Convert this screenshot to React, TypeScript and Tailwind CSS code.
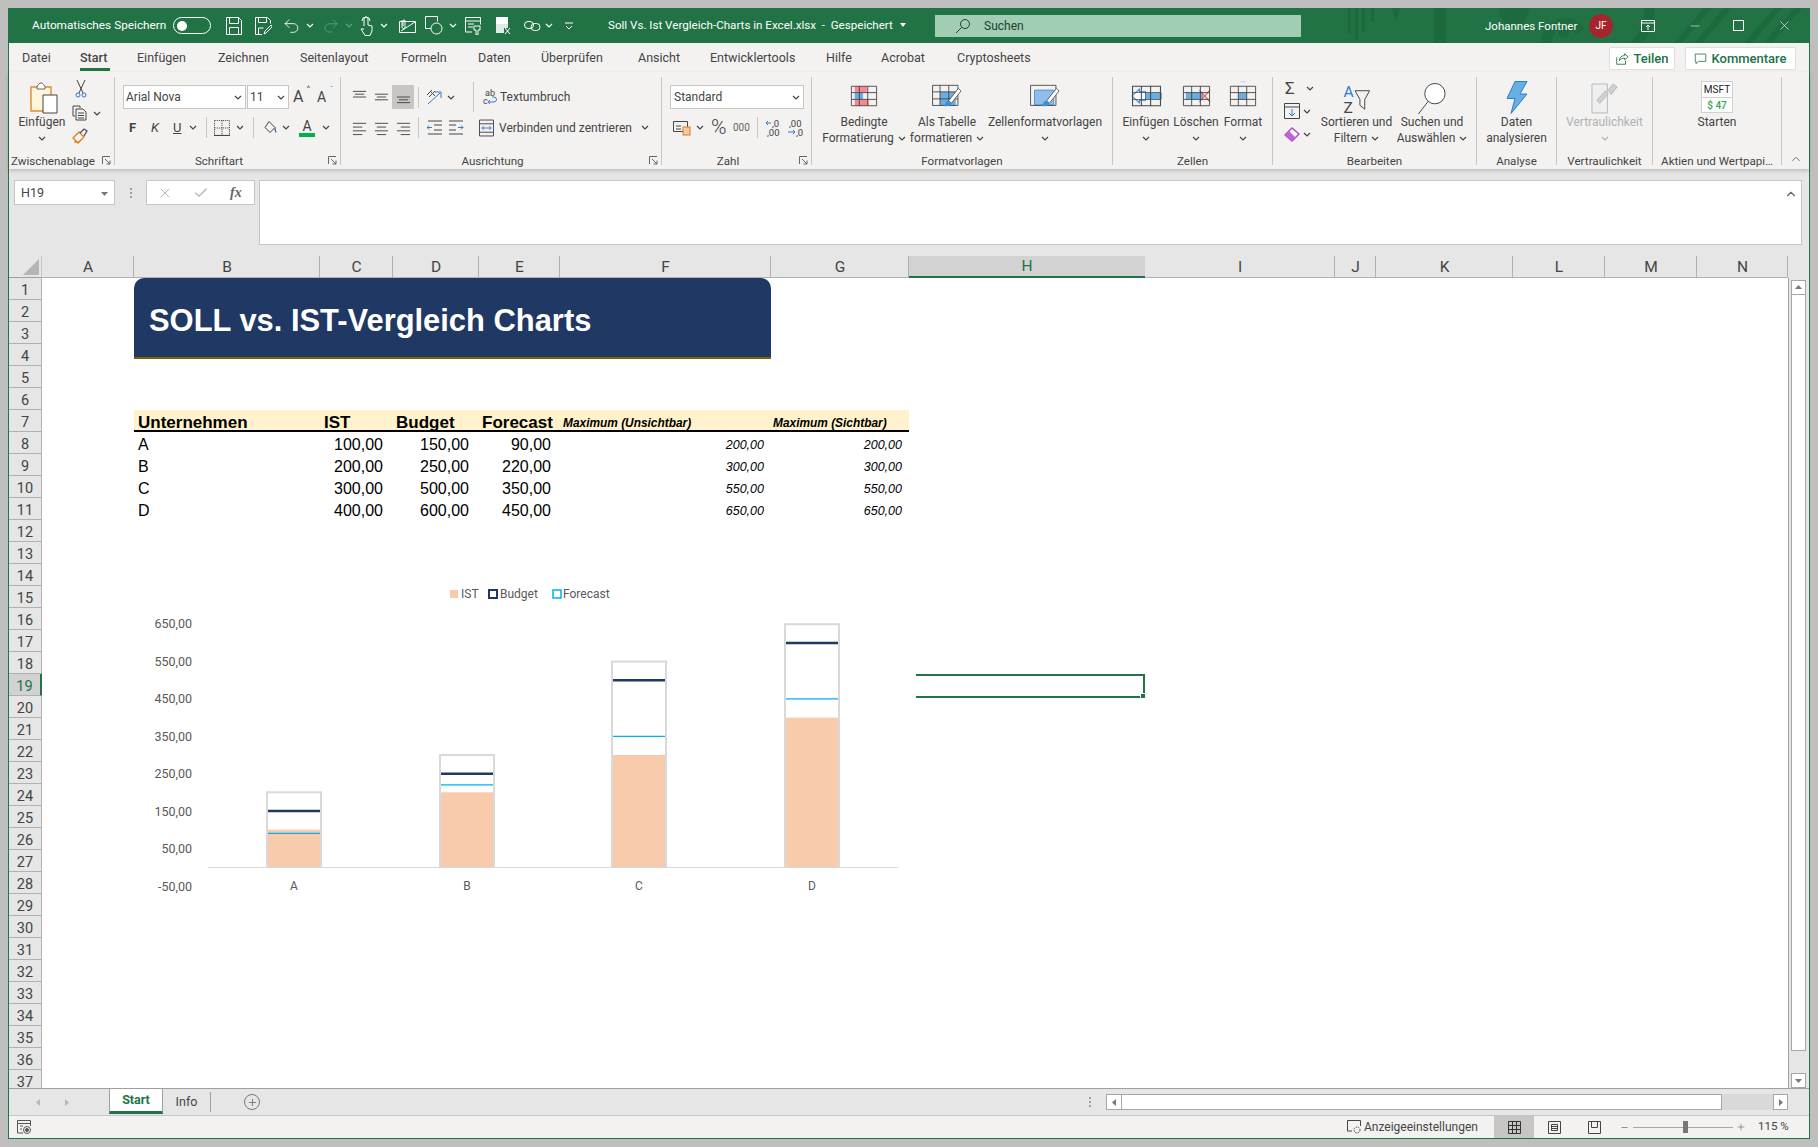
import type { ReactNode } from "react";
import { Check, ChevronUp, Minus, Plus, Redo2, Undo2, X } from "lucide-react";

const rows = Array.from({ length: 37 }, (_, i) => i + 1);

const columns = [
  ["A", ""],
  ["B", ""],
  ["C", ""],
  ["D", ""],
  ["E", ""],
  ["F", ""],
  ["G", ""],
  ["H", "sel"],
  ["I", ""],
  ["J", ""],
  ["K", ""],
  ["L", ""],
  ["M", ""],
  ["N", ""],
];

const tableRows = [
  ["A", "100,00", "150,00", "90,00", "200,00", "200,00"],
  ["B", "200,00", "250,00", "220,00", "300,00", "300,00"],
  ["C", "300,00", "500,00", "350,00", "550,00", "550,00"],
  ["D", "400,00", "600,00", "450,00", "650,00", "650,00"],
];

const bars = [
  { name: "A", x: 267, ist: 100, budget: 150, forecast: 90, max: 200 },
  { name: "B", x: 440, ist: 200, budget: 250, forecast: 220, max: 300 },
  { name: "C", x: 612, ist: 300, budget: 500, forecast: 350, max: 550 },
  { name: "D", x: 785, ist: 400, budget: 600, forecast: 450, max: 650 },
];

const axis = [
  ["650,00", 624],
  ["550,00", 662],
  ["450,00", 699],
  ["350,00", 737],
  ["250,00", 774],
  ["150,00", 812],
  ["50,00", 849],
  ["-50,00", 887],
] as const;

const yFor = (v: number) => 867 - v * 0.3735;

// small chevron used all over the ribbon
const Chev = ({ className = "" }: { className?: string }) => (
  <svg viewBox="0 0 8 5" className={`h-[5px] w-[8px] shrink-0 ${className}`} fill="none" stroke="currentColor" strokeWidth="1.2">
    <path d="M1 1l3 3 3-3" />
  </svg>
);

const Group = ({
  label,
  width,
  launcher,
  children,
}: {
  label: string;
  width: string;
  launcher?: boolean;
  children: ReactNode;
}) => (
  <div className={`relative my-[5px] h-[88px] shrink-0 border-r border-[#c8c6c4] ${width}`}>
    <div className="flex h-[76px]">{children}</div>
    <div className={`h-[16px] whitespace-nowrap text-center text-[11.6px] leading-[16px] text-[#444] ${launcher ? "pr-[17px]" : ""}`}>{label}</div>
    {launcher && (
      <svg viewBox="0 0 9 9" className="absolute right-[3px] top-[79px] h-[9px] w-[9px]" fill="none" stroke="#666" strokeWidth="1">
        <path d="M.5 8V.5H8M3 3l5 5M8 4.5V8H4.5" />
      </svg>
    )}
  </div>
);

const Big = ({
  icon,
  l1,
  l2,
  chevBelow,
  chevInline,
  width,
  gray,
}: {
  icon: ReactNode;
  l1: string;
  l2?: string;
  chevBelow?: boolean;
  chevInline?: boolean;
  width: string;
  gray?: boolean;
}) => (
  <div className={`flex shrink-0 flex-col items-center whitespace-nowrap text-[12px] leading-[16px] ${width} ${gray ? "text-[#b1b1b1]" : "text-[#444]"}`}>
    <div className="flex h-[37px] items-center">{icon}</div>
    <div>{l1}</div>
    {l2 && (
      <div className="flex items-center gap-[4px]">
        {l2}
        {chevInline && <Chev />}
      </div>
    )}
    {chevBelow && (
      <div className="flex h-[16px] items-center">
        <Chev />
      </div>
    )}
  </div>
);

// the grid glyph shared by the big format and cell buttons
const GridIco = ({ children, className = "h-[22px] w-[28px]" }: { children?: ReactNode; className?: string }) => (
  <svg viewBox="0 0 30 26" preserveAspectRatio="none" className={className} fill="none">
    {children}
    <path d="M1.5 1.5h27v23h-27zM1.5 9h27M1.5 17h27M10 1.5v23M19 1.5v23" stroke="#444" strokeWidth="1" />
  </svg>
);

const BrushBit = () => (
  <g>
    <path d="M30 5L19 19l3 3L33 8z" fill="#fff" stroke="#555" strokeWidth="1" />
    <path d="M19 19c-3 0-4 2-5 6 3 1 7 0 8-3z" fill="#3f8fd2" />
  </g>
);

const Lines = ({ d, className = "h-[16px] w-[16px]", stroke = "#444" }: { d: string; className?: string; stroke?: string }) => (
  <svg viewBox="0 0 16 16" className={className} fill="none" stroke={stroke} strokeWidth="1">
    <path d={d} />
  </svg>
);

const TitleBarPattern = () => (
  <svg viewBox="0 0 465 35" className="absolute right-0 top-0 h-[35px] w-[465px]" fill="#1c6a3e">
    <path d="M4 0h3v26H4zM11 0h3v32h-3zM18 0h3v24h-3zM27 0h3v14h-3zM48 0h8l-4 14zM90 0h12v35H90z" />
    <path d="M155 0h30c-1 12-8 19-15 19s-14-7-15-19z" />
    <path d="M197 35a24 24 0 0 1 44-14l-9 6a13 13 0 0 0-24 8z" />
    <circle cx="220" cy="24" r="6" />
    <path d="M300 0h10c1 14-4 27-12 35h-12c9-9 15-21 14-35zM330 35l30-35h8l-30 35zM350 35l30-35h8l-30 35zM400 35l30-35h8l-30 35zM420 35l30-35h8l-30 35z" />
  </svg>
);

const TitleBar = () => (
  <div className="relative flex h-[35px] shrink-0 items-center overflow-hidden bg-[#217346] text-white">
    <TitleBarPattern />
    <div className="relative flex items-center">
      <div className="ml-[23px] w-[141px] whitespace-nowrap text-[11.8px]">Automatisches Speichern</div>
      <div className="flex h-[17px] w-[38px] items-center rounded-full border border-white pl-[3px]">
        <div className="h-[10px] w-[10px] rounded-full bg-white" />
      </div>
      <svg viewBox="0 0 16 18" className="ml-[15px] h-[18px] w-[16px]" fill="none" stroke="#fff">
        <path d="M.5.5h12l3 3v14H.5zM3.5.5v6h9v-6M3.5 17.5v-7h9v7" />
      </svg>
      <svg viewBox="0 0 17 18" className="ml-[13px] h-[18px] w-[17px]" fill="none" stroke="#fff">
        <path d="M7 17.5H.5V.5h12l3 3v3M3.5.5v5h8v-5M3.5 17v-6h5M9 17l1-3 6-6 1 1 0 1-6 6z" />
      </svg>
      <Undo2 className="ml-[10px] h-[20px] w-[19px]" strokeWidth={1.1} />
      <Chev className="ml-[5px]" />
      <Redo2 className="ml-[8px] h-[20px] w-[18px] text-[#5aa37d]" strokeWidth={1.1} />
      <Chev className="ml-[5px] text-[#5aa37d]" />
      <svg viewBox="0 0 13 20" className="ml-[7px] h-[20px] w-[13px]" fill="none" stroke="#fff">
        <path d="M4 10V3a2 2 0 0 1 4 0v6l4 1v5l-2 4.5H5L1 13l3 0M2 5a4 4 0 0 1 8 0" />
      </svg>
      <Chev className="ml-[7px]" />
      <svg viewBox="0 0 17 14" className="ml-[11px] h-[14px] w-[17px]" fill="none" stroke="#fff">
        <path d="M.5 2.5h16v11H.5zM2 12L16 3M3 1v7a1.5 1.5 0 0 0 3 0V2a1 1 0 0 0-2 0v5" />
      </svg>
      <svg viewBox="0 0 18 19" className="ml-[9px] h-[19px] w-[18px]" fill="none" stroke="#fff">
        <path d="M6 12.5H.5V.5h12v5" />
        <circle cx="11.5" cy="12.5" r="5.5" />
      </svg>
      <Chev className="ml-[6px]" />
      <svg viewBox="0 0 16 18" className="ml-[8px] h-[18px] w-[16px]" fill="none" stroke="#fff">
        <path d="M7 15H.5V.5h15v7M.5 4h15M3 7h6M3 10h5M9 9h6v4h-2v5h-2v-5H9z" />
      </svg>
      <svg viewBox="0 0 15 18" className="ml-[15px] h-[18px] w-[15px]">
        <path d="M0 0h12v7H0z" fill="#fff" />
        <path d="M0 7h12v4H8v5H0z" fill="#fff" opacity=".85" />
        <path d="M9 11l5 6M14 11l-5 6" stroke="#fff" fill="none" />
      </svg>
      <svg viewBox="0 0 17 12" className="ml-[13px] h-[12px] w-[17px]" fill="none" stroke="#fff">
        <rect x=".5" y="1.5" width="9" height="7" rx="3.5" />
        <rect x="7" y="3.5" width="9" height="7" rx="3.5" />
      </svg>
      <Chev className="ml-[4px]" />
      <svg viewBox="0 0 8 8" className="ml-[12px] h-[8px] w-[8px]" fill="none" stroke="#fff">
        <path d="M0 1h8M1 4l3 3 3-3" />
      </svg>
      <div className="ml-[35px] flex w-[327px] items-center gap-[7px] whitespace-nowrap text-[11.6px]">
        Soll Vs. Ist Vergleich-Charts in Excel.xlsx&nbsp; -&nbsp; Gespeichert
        <svg viewBox="0 0 6 4" className="h-[4px] w-[6px]" fill="#fff">
          <path d="M0 0h6L3 4z" />
        </svg>
      </div>
      <div className="flex h-[22px] w-[366px] items-center bg-[#a0cdb3] pl-[20px] text-[12px] text-[#24402f]">
        <svg viewBox="0 0 16 16" className="h-[16px] w-[16px]" fill="none" stroke="#24402f">
          <circle cx="10" cy="6" r="4.5" />
          <path d="M6.5 9.5L1 15" />
        </svg>
        <span className="ml-[13px]">Suchen</span>
      </div>
      <div className="ml-[184px] w-[104px] whitespace-nowrap pt-[2px] text-[11.5px]">Johannes Fontner</div>
      <div className="flex h-[24px] w-[24px] items-center justify-center rounded-full bg-[#a4262c] text-[10px]">JF</div>
      <svg viewBox="0 0 14 12" className="ml-[28px] h-[12px] w-[14px]" fill="none" stroke="#fff">
        <path d="M.5.5h13v11H.5zM.5 3h13M7 10V5M5 7l2-2 2 2" />
      </svg>
      <Minus className="ml-[33px] h-[14px] w-[14px]" strokeWidth={1} />
      <div className="ml-[31px] h-[11px] w-[11px] border border-white" />
      <X className="ml-[33px] h-[15px] w-[15px]" strokeWidth={1} />
    </div>
  </div>
);

const Tabs = () => (
  <div className="flex h-[29px] shrink-0 items-center bg-[#f3f2f1] pl-[13px] pt-[2px] text-[12.5px] text-[#444]">
    <div className="w-[58px]">Datei</div>
    <div className="relative flex h-[27px] w-[57px] items-center font-medium">
      Start
      <div className="absolute bottom-[1px] left-0 h-[3px] w-[30px] bg-[#217346]" />
    </div>
    <div className="w-[81px]">Einfügen</div>
    <div className="w-[82px]">Zeichnen</div>
    <div className="w-[101px]">Seitenlayout</div>
    <div className="w-[77px]">Formeln</div>
    <div className="w-[63px]">Daten</div>
    <div className="w-[97px]">Überprüfen</div>
    <div className="w-[72px]">Ansicht</div>
    <div className="w-[116px]">Entwicklertools</div>
    <div className="w-[55px]">Hilfe</div>
    <div className="w-[76px]">Acrobat</div>
    <div>Cryptosheets</div>
    <div className="ml-auto mr-[13px] flex gap-[10px] text-[13px] font-medium text-[#217346]">
      <div className="flex h-[23px] w-[66px] items-center justify-center gap-[4px] rounded-[2px] border border-[#e1dfdd] bg-white">
        <Lines d="M2 6v8h10v-4M5 10c0-4 3-6 6-6V2l4 3.5L11 9V7c-3 0-5 1-6 3z" className="h-[14px] w-[14px]" stroke="#217346" />
        Teilen
      </div>
      <div className="flex h-[23px] w-[111px] items-center justify-center gap-[4px] rounded-[2px] border border-[#e1dfdd] bg-white">
        <Lines d="M1.5 2.5h13v9h-9l-3 3v-3h-1z" className="h-[13px] w-[13px]" stroke="#217346" />
        Kommentare
      </div>
    </div>
  </div>
);

const Ribbon = () => (
  <div className="relative z-10 flex h-[97px] shrink-0 bg-[#f3f2f1] shadow-[0_2px_4px_rgba(0,0,0,0.18)]">
    <Group label="Zwischenablage" width="w-[106px]" launcher>
      <Big
        width="w-[66px]"
        l1="Einfügen"
        chevBelow
        icon={
          <svg viewBox="0 0 28 32" className="ml-[3px] mt-[4px] h-[32px] w-[28px]" fill="none">
            <path d="M1 5h20v24H1z" fill="#fff4dc" stroke="#e08a2e" strokeWidth="1.4" />
            <path d="M7 5c0-2 2-2 3-4h2c1 2 3 2 3 4v2H7z" fill="#fff" stroke="#666" />
            <path d="M13 13h14v18H13z" fill="#fff" stroke="#444" />
          </svg>
        }
      />
      <div className="-ml-[3px] flex w-[40px] flex-col items-start pt-[3px]">
        <svg viewBox="0 0 12 18" className="ml-[3px] h-[18px] w-[12px]" fill="none" stroke="#444">
          <path d="M2 0l6 13M10 0L4 13" />
          <circle cx="3" cy="15" r="2" stroke="#2b7cd3" />
          <circle cx="9" cy="15" r="2" stroke="#2b7cd3" />
        </svg>
        <div className="mt-[7px] flex items-center gap-[5px] text-[#444]">
          <Lines d="M3 11H1V1h7v2M4 4h7l3 3v8H4zM6 8h6M6 10.5h6M6 13h6" />
          <Chev />
        </div>
        <svg viewBox="0 0 16 17" className="mt-[7px] h-[17px] w-[16px]" fill="none" stroke="#e07b1a" strokeWidth="1.3">
          <path d="M1 10l6-6 5 5-6 6zM4 12l-1 3M7 13l-1 2" />
          <path d="M8 5l4-4 3 2-3 5" stroke="#555" />
        </svg>
      </div>
    </Group>

    <Group label="Schriftart" width="w-[226px]" launcher>
      <div className="flex flex-col text-[#444]">
        <div className="ml-[8px] mt-[8px] flex h-[24px] items-center">
          <div className="flex h-[24px] w-[123px] items-center justify-between border border-[#c8c6c4] bg-white pl-[2px] pr-[3px] text-[12px]">
            Arial Nova
            <Chev />
          </div>
          <div className="ml-px flex h-[24px] w-[42px] items-center justify-between border border-[#c8c6c4] bg-white pl-[2px] pr-[3px] text-[12px]">
            11
            <Chev />
          </div>
          <div className="relative ml-[4px] w-[16px] text-[16px]">A<span className="absolute -right-[1px] -top-[2px] text-[8px]">^</span></div>
          <div className="relative ml-[8px] w-[14px] text-[14px]">A<span className="absolute -right-[2px] -top-[3px] text-[8px] text-[#2b7cd3]">ˇ</span></div>
        </div>
        <div className="mt-[7px] flex h-[23px] items-center">
          <span className="ml-[14px] w-[22px] text-[13px] font-bold">F</span>
          <span className="w-[22px] text-[13px] italic">K</span>
          <span className="w-[15px] text-[13px] underline">U</span>
          <Chev className="ml-[1px]" />
          <div className="ml-[9px] h-[21px] w-px bg-[#c8c6c4]" />
          <svg viewBox="0 0 15 15" className="ml-[7px] h-[16px] w-[16px]" fill="none" stroke="#444">
            <path d="M.5.5h14M.5 7.5h14M.5.5v14M7.5.5v14M14.5.5v14" strokeDasharray="1 1" />
            <path d="M0 14.5h15" />
          </svg>
          <Chev className="ml-[6px]" />
          <div className="ml-[9px] h-[21px] w-px bg-[#c8c6c4]" />
          <svg viewBox="0 0 14 14" className="ml-[9px] h-[15px] w-[14px]" fill="none" stroke="#444">
            <path d="M6 1l6 6-5 5-5-5zM12 8l1 4" />
            <path d="M12 7v3" stroke="#2b7cd3" />
          </svg>
          <Chev className="ml-[5px]" />
          <div className="ml-[9px] flex w-[16px] flex-col items-center text-[14px] leading-[14px]">
            A
            <div className="h-[4px] w-[16px] bg-[#00b050]" />
          </div>
          <Chev className="ml-[7px]" />
        </div>
      </div>
    </Group>

    <Group label="Ausrichtung" width="w-[321px]" launcher>
      <div className="flex flex-col text-[#444]">
        <div className="ml-[11px] mt-[8px] flex h-[24px] items-center">
          <Lines d="M1 2h14M3 5h10M1 8h14" className="h-[16px] w-[15px]" />
          <Lines d="M1 5h14M3 8h10M1 11h14" className="ml-[7px] h-[16px] w-[15px]" />
          <div className="ml-[3px] flex h-[24px] w-[22px] items-center justify-center bg-[#c8c6c4]">
            <Lines d="M1 8h14M3 11h10M1 14h14" className="h-[16px] w-[15px]" />
          </div>
          <div className="ml-[4px] h-[21px] w-px bg-[#c8c6c4]" />
          <svg viewBox="0 0 16 16" className="ml-[7px] h-[16px] w-[16px]" fill="none" stroke="#444">
            <path d="M1 6l5-5M3 8l6-6M5 3l4 4" />
            <path d="M2 15L14 4M9 3h6v6" stroke="#2b7cd3" />
          </svg>
          <Chev className="ml-[5px]" />
          <div className="ml-[18px] h-[30px] w-px bg-[#c8c6c4]" />
          <div className="ml-[9px] flex items-center whitespace-nowrap text-[12px]">
            <svg viewBox="0 0 14 18" className="h-[18px] w-[14px]" fill="none" stroke="#2b7cd3">
              <text x="2" y="8" fontSize="9" fill="#444" stroke="none">ab</text>
              <text x="0" y="16" fontSize="9" fill="#444" stroke="none">c</text>
              <path d="M5 14h6a2.500 2.500 0 0 0 0-5H9M7 12l-2 2 2 2" />
            </svg>
            <span className="ml-[3px]">Textumbruch</span>
          </div>
        </div>
        <div className="mt-[7px] flex h-[23px] items-center">
          <Lines d="M1 3h14M1 7h10M1 11h14M1 15h10" className="ml-[11px] h-[16px] w-[15px]" />
          <Lines d="M1 3h14M3 7h10M1 11h14M3 15h10" className="ml-[7px] h-[16px] w-[15px]" />
          <Lines d="M1 3h14M5 7h10M1 11h14M5 15h10" className="ml-[7px] h-[16px] w-[15px]" />
          <div className="ml-[7px] h-[21px] w-px bg-[#c8c6c4]" />
          <svg viewBox="0 0 15 15" className="ml-[8px] h-[15px] w-[15px]" fill="none" stroke="#444">
            <path d="M1 1h14M7 5h8M7 10h8M1 14h14" />
            <path d="M5 7.5H0M2 5.5l-2 2 2 2" stroke="#2b7cd3" />
          </svg>
          <svg viewBox="0 0 15 15" className="ml-[7px] h-[15px] w-[15px]" fill="none" stroke="#444">
            <path d="M0 1h14M0 5h7M0 10h7M0 14h14" />
            <path d="M9 7.5h5M12 5.5l2 2-2 2" stroke="#2b7cd3" />
          </svg>
          <svg viewBox="0 0 16 18" className="ml-[15px] h-[18px] w-[15px]" fill="none" stroke="#444">
            <path d="M.5.5h15v17H.5zM.5 4.5h15M.5 13.5h15" />
            <path d="M3 9h10M5 7L3 9l2 2M11 7l2 2-2 2" stroke="#2b7cd3" />
          </svg>
          <span className="ml-[5px] whitespace-nowrap text-[12px]">Verbinden und zentrieren</span>
          <Chev className="ml-[9px]" />
        </div>
      </div>
    </Group>

    <Group label="Zahl" width="w-[150px]" launcher>
      <div className="flex flex-col text-[#444]">
        <div className="ml-[8px] mt-[8px] flex h-[24px] w-[134px] items-center justify-between border border-[#c8c6c4] bg-white pl-[3px] pr-[3px] text-[12px]">
          Standard
          <Chev />
        </div>
        <div className="mt-[7px] flex h-[23px] items-center">
          <svg viewBox="0 0 18 16" className="ml-[11px] h-[16px] w-[18px]" fill="none" stroke="#444">
            <path d="M.5 1.5h14v10H.5zM3 6h5M3 9h5" />
            <rect x="10" y="7" width="7" height="8" fill="#f5c9a1" stroke="#e07b1a" />
          </svg>
          <Chev className="ml-[5px]" />
          <span className="ml-[7px] w-[22px] text-[21px] font-light">%</span>
          <span className="w-[21px] text-[10px] text-[#666]">000</span>
          <div className="ml-[3px] h-[21px] w-px bg-[#c8c6c4]" />
          <svg viewBox="0 0 16 18" className="ml-[7px] h-[18px] w-[16px]" fill="none" stroke="#2b7cd3">
            <path d="M6 4H1M3 2L1 4l2 2" />
            <text x="7" y="8" fontSize="9.500" fill="#444" stroke="none">,0</text>
            <text x="2" y="17" fontSize="9.500" fill="#444" stroke="none">,00</text>
          </svg>
          <svg viewBox="0 0 16 18" className="ml-[6px] h-[18px] w-[16px]" fill="none" stroke="#2b7cd3">
            <path d="M1 13h7M6 11l2 2-2 2" />
            <text x="2" y="8" fontSize="9.500" fill="#444" stroke="none">,00</text>
            <text x="9" y="17" fontSize="9.500" fill="#444" stroke="none">,0</text>
          </svg>
        </div>
      </div>
    </Group>

    <Group label="Formatvorlagen" width="w-[301px]">
      <Big
        width="ml-[3px] w-[98px]"
        l1="Bedingte"
        l2="Formatierung"
        chevInline
        icon={
          <GridIco>
            <path d="M5 1.5h13V9H5zM5 17h15v7.5H5z" fill="#f8888c" />
            <path d="M5 9h9v8H5z" fill="#69aee3" />
          </GridIco>
        }
      />
      <Big
        width="w-[68px]"
        l1="Als Tabelle"
        l2="formatieren"
        chevInline
        icon={
          <svg viewBox="0 0 34 32" className="mt-[5px] h-[28px] w-[30px]" fill="none">
            <path d="M9 9h18v16H9z" fill="#69aee3" />
            <path d="M.5 1.5h29v23H.5zM.5 9h29M.5 17h29M9 1.5v23M19 1.5v23" stroke="#444" />
            <BrushBit />
          </svg>
        }
      />
      <Big
        width="w-[128px]"
        l1="Zellenformatvorlagen"
        chevBelow
        icon={
          <svg viewBox="0 0 34 32" className="mt-[5px] h-[28px] w-[30px]" fill="none">
            <path d="M5 7h22v17H5z" fill="#8dbde8" stroke="#3f8fd2" />
            <path d="M.5 1.5h29v23H.5z" stroke="#444" />
            <BrushBit />
          </svg>
        }
      />
    </Group>

    <Group label="Zellen" width="w-[160px]">
      <Big
        width="ml-[8px] w-[50px]"
        l1="Einfügen"
        chevBelow
        icon={
          <GridIco className="h-[22px] w-[31px]">
            <path d="M8 9h22v8H8z" fill="#69aee3" />
            <path d="M14 8H8V5l-7 8 7 8v-3h6z" fill="#fff" stroke="#2b7cd3" />
          </GridIco>
        }
      />
      <Big
        width="w-[50px]"
        l1="Löschen"
        chevBelow
        icon={
          <GridIco className="h-[22px] w-[29px]">
            <path d="M4 9h18v8H4z" fill="#69aee3" />
            <path d="M18 6l11 14M29 6L18 20" stroke="#f0595e" strokeWidth="1.3" />
          </GridIco>
        }
      />
      <Big
        width="w-[44px]"
        l1="Format"
        chevBelow
        icon={
          <div className="-mt-[4px] flex flex-col items-center">
            <Lines d="M1 3h14M1 1v4M15 1v4" className="h-[4px] w-[28px]" stroke="#2b7cd3" />
            <GridIco>
              <path d="M10 9h9v8h-9z" fill="#69aee3" />
            </GridIco>
          </div>
        }
      />
    </Group>

    <Group label="Bearbeiten" width="w-[204px]">
      <div className="ml-[11px] flex w-[35px] flex-col text-[#444]">
        <div className="mt-[3px] flex h-[16px] items-center gap-[7px]">
          <span className="ml-[1px] w-[14px] text-[17px] leading-[16px]">Σ</span>
          <Chev />
        </div>
        <div className="mt-[7px] flex h-[16px] items-center gap-[3px]">
          <svg viewBox="0 0 16 16" className="h-[16px] w-[16px]" fill="none" stroke="#444">
            <path d="M.5.5h15v15H.5zM.5 4h15" />
            <path d="M8 6v7M5 10l3 3 3-3" stroke="#2b7cd3" />
          </svg>
          <Chev />
        </div>
        <div className="mt-[7px] flex h-[16px] items-center gap-[3px]">
          <svg viewBox="0 0 16 16" className="h-[16px] w-[16px]" fill="none">
            <path d="M1 9l7-7 7 6-7 7z" fill="#fff" stroke="#a64dc0" strokeWidth="1.4" />
            <path d="M1 9l4-4 6 6-3 4z" fill="#c25fd9" />
          </svg>
          <Chev />
        </div>
      </div>
      <Big
        width="w-[75px]"
        l1="Sortieren und"
        l2="Filtern"
        chevInline
        icon={
          <svg viewBox="0 0 30 34" className="mt-[5px] h-[33px] w-[30px]" fill="none">
            <text x="1" y="15" fontSize="16" fill="#2b7cd3" stroke="none" fontFamily="Roboto">A</text>
            <text x="1" y="32" fontSize="16" fill="#444" stroke="none" fontFamily="Roboto">Z</text>
            <path d="M13 9h15l-5 9v10l-5-4v-6z" stroke="#444" />
          </svg>
        }
      />
      <Big
        width="w-[76px]"
        l1="Suchen und"
        l2="Auswählen"
        chevInline
        icon={
          <svg viewBox="0 0 30 34" className="mt-[5px] h-[33px] w-[30px]" fill="none" stroke="#444">
            <circle cx="18" cy="12" r="10.5" fill="#fff" />
            <path d="M11 20L1 33" />
          </svg>
        }
      />
    </Group>

    <Group label="Analyse" width="w-[80px]">
      <Big
        width="w-[79px]"
        l1="Daten"
        l2="analysieren"
        icon={
          <svg viewBox="0 0 22 33" className="mt-[3px] h-[33px] w-[22px]">
            <path d="M9 .5h12L14 13h7L5 32.500l4-15H1z" fill="#69aee3" stroke="#2b7cd3" />
          </svg>
        }
      />
    </Group>

    <Group label="Vertraulichkeit" width="w-[96px]">
      <Big
        width="w-[95px]"
        l1="Vertraulichkeit"
        chevBelow
        gray
        icon={
          <svg viewBox="0 0 28 34" className="mt-[3px] h-[33px] w-[27px]" fill="none" stroke="#b8b8b8">
            <path d="M1 3h16v30H1V3z" fill="#efefef" />
            <path d="M6 20l9-10 3 3-9 10zM18 9l5-6 4 3-6 8z" fill="#d0d0d0" />
          </svg>
        }
      />
    </Group>

    <Group label="Aktien und Wertpapi…" width="w-[129px]">
      <Big
        width="w-[128px]"
        l1="Starten"
        icon={
          <div className="mt-[2px] flex h-[32px] w-[32px] flex-col items-center border border-[#d0d0d0] bg-white text-[10px] leading-[15px]">
            <span className="text-[#222]">MSFT</span>
            <span className="w-full border-t border-[#d0d0d0] text-center font-medium text-[#2fa84f]">$ 47</span>
          </div>
        }
      />
    </Group>
    <div className="flex flex-1 items-end justify-center pb-[3px] text-[#444]">
      <ChevronUp className="h-[14px] w-[14px]" strokeWidth={1.2} />
    </div>
  </div>
);

const FormulaBar = () => (
  <div className="flex h-[87px] shrink-0 items-start bg-[#e6e6e6] pl-[5px] pt-[11px]">
    <div className="flex h-[25px] w-[101px] items-center justify-between border border-[#c8c6c4] bg-white pl-[6px] pr-[6px] pt-[2px] text-[12.5px] text-[#444]">
      H19
      <svg viewBox="0 0 7 4" className="h-[4px] w-[7px]" fill="#777">
        <path d="M0 0h7L3.500 4z" />
      </svg>
    </div>
    <div className="ml-[15px] mt-[8px] flex h-[10px] flex-col justify-between">
      <div className="h-[2px] w-[2px] bg-[#a0a0a0]" />
      <div className="h-[2px] w-[2px] bg-[#a0a0a0]" />
      <div className="h-[2px] w-[2px] bg-[#a0a0a0]" />
    </div>
    <div className="ml-[14px] flex h-[25px] w-[109px] items-center border border-[#c8c6c4] bg-white text-[#b8b8b8]">
      <X className="ml-[10px] h-[16px] w-[16px]" strokeWidth={1.5} />
      <Check className="ml-[20px] h-[16px] w-[16px]" strokeWidth={2} />
      <span className="ml-[21px] font-['Liberation_Serif',serif] text-[14px] font-bold italic text-[#666]">fx</span>
    </div>
    <div className="relative ml-[4px] h-[65px] w-[1543px] border border-[#c8c6c4] bg-white">
      <ChevronUp className="absolute right-[3px] top-[6px] h-[14px] w-[14px] text-[#666]" strokeWidth={2} />
    </div>
  </div>
);

const ColumnHeaders = () => (
  <div className="flex h-[22px] shrink-0 bg-[#e6e6e6]">
    <div className="relative h-[22px] w-[33px] shrink-0 border-b border-[#9f9f9f] border-r border-r-[#c8c6c4]">
      <svg viewBox="0 0 16 16" className="absolute bottom-[2px] right-[2px] h-[16px] w-[16px]" fill="#b5b5b5">
        <path d="M16 0v16H0z" />
      </svg>
    </div>
    <div className="grid w-[1747px] shrink-0 grid-cols-[92px_186px_73px_86px_81px_211px_138px_236px_190px_41px_137px_92px_92px_91px]">
      {columns.map(([name, state]) => (
        <div
          key={name}
          className={
            state === "sel"
              ? "flex h-[22px] items-center justify-center border-b-2 border-[#217346] bg-[#d2d2d2] pt-[2px] text-[15.5px] text-[#217346]"
              : "flex h-[22px] items-center justify-center border-b border-r border-[#b1b1b1] pl-[1px] pt-[2px] text-[15.5px] text-[#444]"
          }
        >
          {name}
        </div>
      ))}
    </div>
  </div>
);

const RowHeaders = () => (
  <div className="h-[810px] w-[33px] shrink-0 overflow-hidden bg-[#e6e6e6]">
    {rows.map((r) =>
      r === 19 ? (
        <div key={r} className="flex h-[22px] items-center justify-center border-b border-r-2 border-b-[#b1b1b1] border-r-[#217346] bg-[#d2d2d2] pt-[5px] text-[14.5px] text-[#217346]">
          {r}
        </div>
      ) : (
        <div key={r} className="flex h-[22px] items-center justify-center border-b border-r border-[#b1b1b1] pt-[5px] text-[14.5px] text-[#444]">
          {r}
        </div>
      ),
    )}
  </div>
);

const Chart = () => (
  <svg viewBox="134 564 782 352" className="col-start-2 col-end-9 row-start-14 row-end-30 z-10 h-[352px] w-[782px] bg-white font-['Roboto',sans-serif]">
    <rect x="450" y="590" width="8" height="8" fill="#f7cbac" />
    <text x="461" y="598" fontSize="12" fill="#595959">IST</text>
    <rect x="489" y="590" width="8" height="8" fill="#fff" stroke="#1f3864" strokeWidth="2" />
    <text x="500" y="598" fontSize="12" fill="#595959">Budget</text>
    <rect x="553" y="590" width="8" height="8" fill="#fff" stroke="#00b0f0" strokeWidth="1.5" />
    <text x="563" y="598" fontSize="12" fill="#595959">Forecast</text>
    {axis.map(([label, y]) => (
      <text key={label} x="192" y={y + 4} textAnchor="end" fontSize="12.5" fill="#595959">
        {label}
      </text>
    ))}
    {bars.map((b) => (
      <g key={b.name}>
        <rect x={b.x} y={yFor(b.max)} width="54" height={867 - yFor(b.max)} fill="#fff" stroke="#d9d9d9" strokeWidth="2" />
        <rect x={b.x + 1} y={yFor(b.ist)} width="52" height={867 - yFor(b.ist)} fill="#f7cbac" />
        <path d={`M${b.x + 1} ${yFor(b.forecast)}h52`} stroke="#00b0f0" strokeWidth="1.2" />
        <path d={`M${b.x + 1} ${yFor(b.budget)}h52`} stroke="#1f3864" strokeWidth="2.5" />
        <text x={b.x + 27} y="890" textAnchor="middle" fontSize="12" fill="#595959">
          {b.name}
        </text>
      </g>
    ))}
    <path d="M208 867.500h690" stroke="#d9d9d9" strokeWidth="1.2" />
  </svg>
);

const Sheet = () => (
  <div className="flex h-[810px] shrink-0">
    <RowHeaders />
    <div className="grid h-[810px] w-[1747px] shrink-0 auto-rows-[22px] grid-cols-[92px_186px_73px_86px_81px_211px_138px_236px_190px_41px_137px_92px_92px_91px] overflow-hidden border-r border-[#a0a0a0] bg-white font-['Liberation_Sans',Arial,sans-serif] text-black">
      <div className="col-start-2 col-end-7 row-start-1 row-end-5 flex h-[81px] items-center whitespace-nowrap rounded-t-[10px] border-b-2 border-[#7f6000] bg-[#1f3864] pl-[15px] pt-[8px] text-[30.9px] font-bold text-white">
        SOLL vs. IST-Vergleich Charts
      </div>

      <div className="col-start-2 row-start-7 border-b-2 border-black bg-[#fff2cc] pl-[4px] pt-[3px] text-[17px] font-bold leading-[19px]">Unternehmen</div>
      <div className="col-start-3 row-start-7 border-b-2 border-black bg-[#fff2cc] pl-[4px] pt-[3px] text-[17px] font-bold leading-[19px]">IST</div>
      <div className="col-start-4 row-start-7 border-b-2 border-black bg-[#fff2cc] pl-[3px] pt-[3px] text-[17px] font-bold leading-[19px]">Budget</div>
      <div className="col-start-5 row-start-7 border-b-2 border-black bg-[#fff2cc] pl-[3px] pt-[3px] text-[17px] font-bold leading-[19px]">Forecast</div>
      <div className="col-start-6 row-start-7 whitespace-nowrap border-b-2 border-black bg-[#fff2cc] pl-[3px] pt-[4px] text-[11.9px] font-bold italic leading-[18px]">Maximum (Unsichtbar)</div>
      <div className="col-start-7 row-start-7 whitespace-nowrap border-b-2 border-black bg-[#fff2cc] pl-[2px] pt-[4px] text-[11.9px] font-bold italic leading-[18px]">Maximum (Sichtbar)</div>

      {tableRows.map((row, i) => (
        <div key={row[0]} className="col-start-2 col-end-8 grid grid-cols-[186px_73px_86px_81px_211px_138px] pt-[3px] text-[16px] leading-[19px]" style={{ gridRowStart: i + 8 }}>
          <div className="pl-[4px]">{row[0]}</div>
          <div className="pr-[10px] text-right">{row[1]}</div>
          <div className="pr-[10px] text-right">{row[2]}</div>
          <div className="pr-[9px] text-right">{row[3]}</div>
          <div className="pr-[7px] pt-[1px] text-right text-[12.5px] italic">{row[4]}</div>
          <div className="pr-[7px] pt-[1px] text-right text-[12.5px] italic">{row[5]}</div>
        </div>
      ))}

      <div className="relative col-start-8 row-start-19 h-[24px] border-2 border-[#217346]">
        <div className="absolute -bottom-[3px] -right-[3px] h-[6px] w-[6px] border border-white bg-[#217346]" />
      </div>
      <Chart />
    </div>
    <div className="flex h-[810px] w-[20px] shrink-0 flex-col items-start bg-[#e6e6e6] pl-[2px] pt-[2px]">
      <div className="flex h-[15px] w-[15px] items-center justify-center border border-[#a6a6a6] bg-white">
        <svg viewBox="0 0 7 4" className="h-[4px] w-[7px]" fill="#777">
          <path d="M3.500 0L7 4H0z" />
        </svg>
      </div>
      <div className="h-[778px] w-[15px] border-x border-b border-[#a6a6a6] bg-white" />
      <div className="mt-[22px] flex h-[15px] w-[15px] items-center justify-center border border-[#a6a6a6] bg-white">
        <svg viewBox="0 0 7 4" className="h-[4px] w-[7px]" fill="#777">
          <path d="M0 0h7L3.500 4z" />
        </svg>
      </div>
    </div>
  </div>
);

const SheetTabs = () => (
  <div className="flex h-[28px] shrink-0 border-y border-t-[#9f9f9f] border-b-[#c8c6c4] bg-[#e6e6e6] text-[12.5px] text-[#444]">
    <div className="flex w-[100px] items-center text-[#b8b8b8]">
      <svg viewBox="0 0 4 7" className="ml-[27px] h-[7px] w-[4px]" fill="currentColor">
        <path d="M4 0v7L0 3.500z" />
      </svg>
      <svg viewBox="0 0 4 7" className="ml-[25px] h-[7px] w-[4px]" fill="currentColor">
        <path d="M0 0v7l4-3.500z" />
      </svg>
    </div>
    <div className="flex h-[25px] w-[54px] items-center justify-center border-x border-b-[3px] border-x-[#9f9f9f] border-b-[#217346] bg-white font-bold text-[#217346]">
      Start
    </div>
    <div className="flex h-[20px] w-[48px] items-center justify-center self-center border-r border-[#9f9f9f]">Info</div>
    <div className="ml-[33px] flex h-[16px] w-[16px] items-center justify-center self-center rounded-full border border-[#777] text-[#777]">
      <Plus className="h-[11px] w-[11px]" strokeWidth={2} />
    </div>
    <div className="ml-[829px] flex h-[10px] flex-col justify-between self-center">
      <div className="h-[2px] w-[2px] bg-[#a0a0a0]" />
      <div className="h-[2px] w-[2px] bg-[#a0a0a0]" />
      <div className="h-[2px] w-[2px] bg-[#a0a0a0]" />
    </div>
    <div className="ml-[15px] flex h-[16px] w-[682px] items-center self-center bg-[#d9d9d9]">
      <div className="flex h-[16px] w-[16px] items-center justify-center border border-[#a6a6a6] bg-white">
        <svg viewBox="0 0 4 7" className="h-[7px] w-[4px]" fill="#777">
          <path d="M4 0v7L0 3.500z" />
        </svg>
      </div>
      <div className="h-[16px] w-[600px] border-y border-r border-[#a6a6a6] bg-white" />
      <div className="ml-auto flex h-[16px] w-[15px] items-center justify-center border border-[#a6a6a6] bg-white">
        <svg viewBox="0 0 4 7" className="h-[7px] w-[4px]" fill="#777">
          <path d="M0 0v7l4-3.500z" />
        </svg>
      </div>
    </div>
  </div>
);

const StatusBar = () => (
  <div className="flex h-[22px] shrink-0 items-center bg-[#f3f2f1] text-[12px] text-[#444]">
    <svg viewBox="0 0 14 14" className="ml-[8px] h-[14px] w-[14px]" fill="none" stroke="#555">
      <path d="M6 13H.5V.5h13V6M.5 3.500h13M3 6h3M3 9h2" />
      <circle cx="10" cy="10" r="3.500" />
      <circle cx="10" cy="10" r="1.500" fill="#555" />
    </svg>
    <div className="ml-auto flex items-center">
      <svg viewBox="0 0 14 14" className="h-[14px] w-[14px]" fill="none" stroke="#444">
        <path d="M5 11H.5V.5h13V6" />
        <circle cx="10" cy="10" r="3" strokeDasharray="1.5 1" />
      </svg>
      <span className="ml-[3px] w-[130px] whitespace-nowrap">Anzeigeeinstellungen</span>
      <div className="flex h-[22px] w-[40px] items-center justify-center bg-[#c8c6c4]">
        <svg viewBox="0 0 13 13" className="h-[13px] w-[13px]" fill="none" stroke="#333">
          <path d="M.5.5h12v12H.5zM.5 4.500h12M.5 8.500h12M4.500.5v12M8.500.5v12" />
        </svg>
      </div>
      <svg viewBox="0 0 13 13" className="ml-[14px] h-[13px] w-[13px]" fill="none" stroke="#444">
        <path d="M.5.5h12v12H.5zM3.500 3.500h6v6h-6zM3.500 5.500h6M3.500 7.500h6" />
      </svg>
      <svg viewBox="0 0 13 13" className="ml-[27px] h-[13px] w-[13px]" fill="none" stroke="#444">
        <path d="M.5.5h12v12H.5zM3.500.5v6h6v-6" />
      </svg>
      <Minus className="ml-[19px] h-[9px] w-[9px]" strokeWidth={1.5} />
      <div className="ml-[4px] flex h-[12px] w-[100px] items-center">
        <div className="h-px w-[50px] bg-[#a6a6a6]" />
        <div className="h-[12px] w-[5px] bg-[#777]" />
        <div className="h-px w-[45px] bg-[#a6a6a6]" />
      </div>
      <Plus className="ml-[3px] h-[10px] w-[10px]" strokeWidth={1.2} />
      <span className="ml-[12px] w-[51px] whitespace-nowrap text-[11.5px]">115 %</span>
    </div>
  </div>
);

export default function App() {
  return (
    <div className="h-[1147px] w-[1818px] overflow-hidden bg-[#bfbfbf] px-[8px] pt-[8px] font-['Roboto',sans-serif]">
      <div className="flex h-[1131px] w-[1802px] flex-col border-x border-b border-[#217346]">
        <TitleBar />
        <Tabs />
        <Ribbon />
        <FormulaBar />
        <ColumnHeaders />
        <Sheet />
        <SheetTabs />
        <StatusBar />
      </div>
    </div>
  );
}
